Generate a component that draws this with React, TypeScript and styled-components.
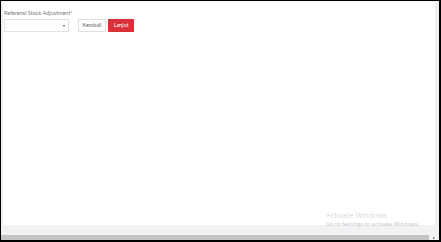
import React from "react";
import styled, { createGlobalStyle } from "styled-components";

const GlobalStyle = createGlobalStyle`
  html, body {
    margin: 0;
    padding: 0;
    background: #000;
  }
  body {
    width: 441px;
    height: 242px;
    overflow: hidden;
    font-family: Lato, "Open Sans", sans-serif;
  }
`;

const Frame = styled.div`
  box-sizing: border-box;
  width: 441px;
  height: 242px;
  border: 1px solid #000;
  border-right-width: 2px;
  border-bottom-width: 2px;
  display: flex;
  flex-direction: column;
  background: #fff;
  position: relative;
`;

const Body = styled.div`
  flex: 1;
  display: flex;
  min-height: 0;
`;

const SideStrip = styled.div<{ $w: number }>`
  width: ${(p) => p.$w}px;
  background: #eeeff1;
  flex-shrink: 0;
`;

const Content = styled.div`
  flex: 1;
  background: #fff;
  border-top: 1px solid #f3f3f3;
  padding: 7px 0 0 1px;
`;

const Label = styled.div`
  font-size: 5.5px;
  color: #7a7a7a;
  line-height: 8px;
  height: 9px;
`;

const FormRow = styled.div`
  display: flex;
  align-items: center;
  margin-top: 1px;
`;

const Select = styled.div`
  box-sizing: border-box;
  width: 65px;
  height: 13px;
  border: 1px solid #e2e2e2;
  display: flex;
  align-items: center;
  justify-content: flex-end;
  padding-right: 3px;
  margin-right: 9px;
`;

const Caret = styled.span`
  width: 0;
  height: 0;
  border-left: 1.5px solid transparent;
  border-right: 1.5px solid transparent;
  border-top: 2px solid #555;
`;

const Button = styled.button<{ $primary?: boolean }>`
  box-sizing: border-box;
  height: 13px;
  padding: 0;
  width: ${(p) => (p.$primary ? 26 : 28)}px;
  margin-right: 2px;
  font-family: Lato, "Open Sans", sans-serif;
  font-size: 5.4px;
  line-height: 11px;
  border: 1px solid ${(p) => (p.$primary ? "#d9303a" : "#e0e0e0")};
  background: ${(p) => (p.$primary ? "#d9303a" : "#fff")};
  color: ${(p) => (p.$primary ? "#fff" : "#666")};
`;

const BottomBar = styled.div`
  height: 10px;
  background: #f1f2f4;
`;

const ScrollRow = styled.div`
  display: flex;
  height: 5px;
`;

const ScrollTrack = styled.div`
  flex: 1;
  background: #c4c4c4;
`;

const ScrollCorner = styled.div`
  width: 10px;
  background: #f1f1f1;
  display: flex;
  align-items: center;
  justify-content: center;
`;

const Arrow = styled.span`
  width: 0;
  height: 0;
  border-top: 1.5px solid transparent;
  border-bottom: 1.5px solid transparent;
  border-left: 2px solid #555;
`;

const Watermark = styled.div`
  position: absolute;
  left: 325px;
  top: 209px;
  font-family: "Open Sans", "Noto Sans", sans-serif;
  color: #c5c5c5;
  pointer-events: none;
`;

const WatermarkTitle = styled.div`
  font-size: 7.8px;
  font-weight: 300;
  line-height: 11px;
`;

const WatermarkSub = styled.div`
  font-size: 5.7px;
  line-height: 7px;
`;

export default function App() {
  return (
    <>
      <GlobalStyle />
      <Frame>
        <Body>
          <SideStrip $w={2} />
          <Content>
            <Label>Referensi Stock Adjustment*</Label>
            <FormRow>
              <Select>
                <Caret />
              </Select>
              <Button>Kembali</Button>
              <Button $primary>Lanjut</Button>
            </FormRow>
          </Content>
          <SideStrip $w={4} />
        </Body>
        <BottomBar />
        <ScrollRow>
          <ScrollTrack />
          <ScrollCorner>
            <Arrow />
          </ScrollCorner>
        </ScrollRow>
        <Watermark>
          <WatermarkTitle>Activate Windows</WatermarkTitle>
          <WatermarkSub>Go to Settings to activate Windows.</WatermarkSub>
        </Watermark>
      </Frame>
    </>
  );
}
